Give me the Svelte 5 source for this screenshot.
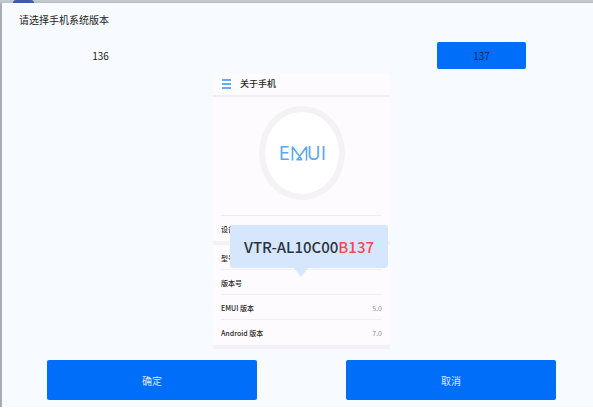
<script>
  const versions = ['136', '137'];
  let selected = $state('137');

  const rows = [
    { label: '设备名称', value: '', band: true },
    { label: '型号', value: '' },
    { label: '版本号', value: '' },
    { label: 'EMUI 版本', value: '5.0' },
    { label: 'Android 版本', value: '7.0', band: true }
  ];
</script>

<div class="backdrop">
  <span class="badge"></span>
  <main class="dialog">
    <h1>请选择手机系统版本</h1>

    <div class="versions">
      {#each versions as version}
        <button
          type="button"
          class="version"
          class:active={selected === version}
          aria-pressed={selected === version}
          onclick={() => (selected = version)}>{version}</button>
      {/each}
    </div>

    <div class="preview">
      <section class="phone">
        <header>
          <svg class="menu" viewBox="0 0 9 10" aria-hidden="true">
            <path d="M0 1h9M0 5h9M0 9h9" stroke="#62abf5" stroke-width="2" />
          </svg>
          <h2>关于手机</h2>
        </header>

        <div class="hero">
          <div class="ring">
            <svg class="logo" viewBox="0 0 46 18" role="img" aria-label="EMUI">
              <text x="0" y="16">E</text>
              <path d="M13.5 16.5V3L23 15.8M27.5 16.5V3L18 15.8H23" />
              <text x="28" y="16">U</text>
              <text x="42" y="16">I</text>
            </svg>
          </div>
        </div>

        <ul>
          {#each rows as row}
            <li class:band={row.band}>
              <span>{row.label}</span>
              <span class="value">{row.value}</span>
            </li>
          {/each}
        </ul>

        <div class="callout">VTR-AL10C00<em>B137</em></div>
      </section>
    </div>

    <div class="actions">
      <button type="button">确定</button>
      <button type="button">取消</button>
    </div>
  </main>
</div>

<style>
  :global(body) {
    margin: 0;
    background: #fff;
  }

  .backdrop {
    position: relative;
    box-sizing: border-box;
    padding: 3px 0 0 2px;
    background: linear-gradient(#c3cacd 0, #c3cacd 1px, #b9bbc0 3px, #a9abb5 4px);
    font-family: 'Noto Sans CJK SC', 'Noto Sans', sans-serif;
    color: #1d1f22;
  }

  .badge {
    position: absolute;
    top: 0;
    left: 13px;
    width: 21px;
    height: 3px;
    border-radius: 8px 8px 0 0;
    background: #3d5da6;
  }

  .dialog {
    position: relative;
    padding: 9px 0 7px;
    background: #f7faff;
  }

  h1,
  h2 {
    margin: 0;
    font-weight: 400;
  }

  h1 {
    padding-left: 17px;
    font-size: 10px;
    line-height: 16px;
  }

  button {
    border: 0;
    border-radius: 2px;
    padding: 0;
    font-family: inherit;
    font-size: 10px;
    cursor: pointer;
  }

  .versions {
    display: flex;
    justify-content: space-between;
    padding: 14px 67px 0 54px;
  }

  .version {
    width: 89px;
    height: 27px;
    background: transparent;
    color: #1d1f22;
  }

  .version.active {
    background: #006ef9;
    color: #0b2549;
  }

  .preview {
    display: flex;
    justify-content: center;
    padding: 4px 0 11px 8px;
  }

  .phone {
    position: relative;
    width: 177px;
    background: #fefbfe;
  }

  header {
    display: flex;
    align-items: center;
    gap: 9px;
    height: 22px;
    padding-left: 9px;
    border-bottom: 2px solid #f2eef1;
  }

  .menu {
    width: 9px;
    height: 10px;
  }

  h2 {
    font-size: 9px;
    font-weight: 500;
    line-height: 14px;
  }

  .hero {
    display: flex;
    justify-content: center;
    margin: 0 8px;
    padding: 9px 0 15px;
    height: 94px;
    border-bottom: 1px solid #f0edf0;
  }

  .ring {
    display: flex;
    align-items: center;
    justify-content: center;
    box-sizing: border-box;
    width: 86px;
    height: 94px;
    border: 6px solid #f4f2f4;
    border-radius: 50%;
    background: #fff;
  }

  .logo {
    width: 46px;
    height: 18px;
    overflow: visible;
    font-family: Inter, sans-serif;
    font-size: 18px;
    font-weight: 400;
    fill: #59a9f7;
  }

  .logo path {
    fill: none;
    stroke: #59a9f7;
    stroke-width: 1.6;
    stroke-linejoin: round;
  }

  ul {
    margin: 0;
    padding: 0;
    list-style: none;
  }

  li {
    display: flex;
    align-items: center;
    justify-content: space-between;
    box-sizing: border-box;
    height: 25px;
    padding: 0 8px;
    background: linear-gradient(#f2eff2, #f2eff2) 8px 100% / calc(100% - 16px) 1px no-repeat;
    font-size: 7px;
    font-weight: 500;
  }

  li.band {
    height: 29px;
    border-bottom: 4px solid #f5f2f5;
    background: none;
  }

  .value {
    color: #8d8d92;
    font-weight: 400;
  }

  .callout {
    position: absolute;
    top: 152px;
    left: 17px;
    width: 158px;
    border-radius: 3px;
    background: #d6e6fc;
    color: #2c3440;
    font-size: 15px;
    font-weight: 500;
    line-height: 43px;
    text-align: center;
    white-space: nowrap;
  }

  .callout::after {
    content: '';
    position: absolute;
    top: 100%;
    left: 64px;
    border: 7px solid transparent;
    border-top: 9px solid #d6e6fc;
    border-bottom: 0;
  }

  .callout em {
    color: #f7474f;
    font-style: normal;
  }

  .actions {
    display: flex;
    gap: 89px;
    padding: 0 37px 0 45px;
  }

  .actions button {
    flex: 1;
    height: 40px;
    background: #006ef9;
    color: #d9eaff;
  }
</style>
